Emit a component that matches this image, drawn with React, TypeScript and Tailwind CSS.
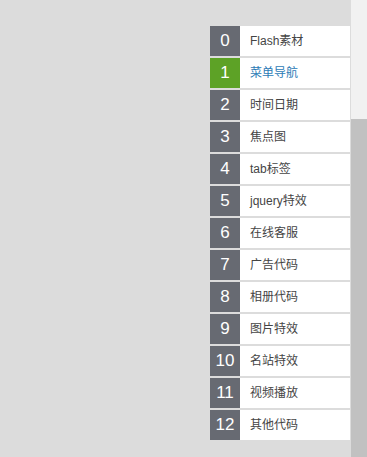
import React from "react";

const items = [
  "Flash素材",
  "菜单导航",
  "时间日期",
  "焦点图",
  "tab标签",
  "jquery特效",
  "在线客服",
  "广告代码",
  "相册代码",
  "图片特效",
  "名站特效",
  "视频播放",
  "其他代码",
];

export default function App() {
  const active = 1;
  return (
    <div className="flex h-[457px] w-[367px] overflow-hidden bg-[#dcdcdc] font-['Liberation_Sans','Noto_Sans_CJK_SC',sans-serif]">
      <div className="flex w-[351px] flex-col items-end pr-[1px] pt-[26px]">
        <ul className="flex w-[140px] flex-col gap-[2px]">
          {items.map((label, i) => (
            <li key={i} className="flex h-[30px] bg-white">
              <span
                className={`flex w-[30px] items-center justify-center text-[17px] text-white ${
                  i === active ? "bg-[#5da226]" : "bg-[#676a72]"
                }`}
              >
                {i}
              </span>
              <span
                className={`flex items-center pl-[10px] text-[12px] ${
                  i === active ? "text-[#2c7bb6]" : "text-[#444]"
                }`}
              >
                {label}
              </span>
            </li>
          ))}
        </ul>
      </div>
      <div className="flex w-[16px] flex-col bg-[#f1f1f1]">
        <div className="h-[119px]" />
        <div className="flex-1 bg-[#c1c1c1]" />
      </div>
    </div>
  );
}
